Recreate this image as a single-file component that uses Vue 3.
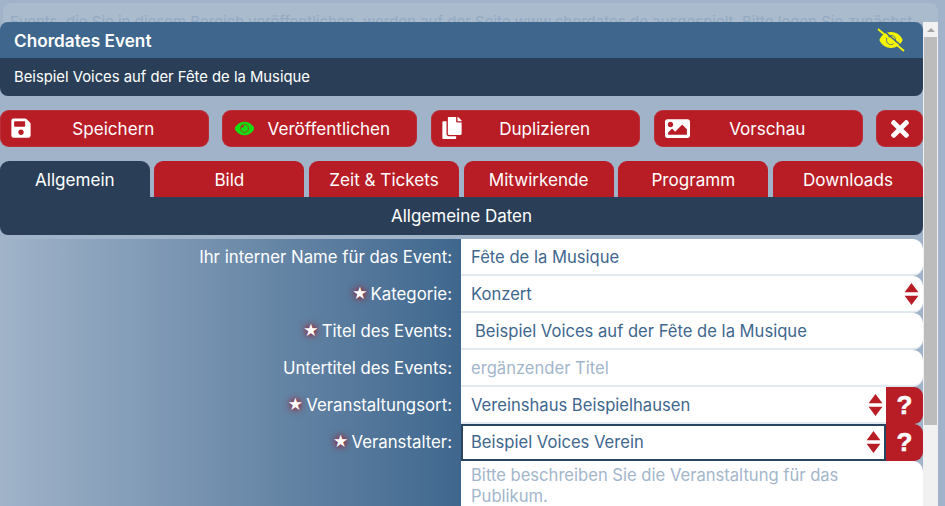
<script setup>
const actions = [
  { label: 'Speichern', icon: 'save', w: 208.7 },
  { label: 'Veröffentlichen', icon: 'eye', w: 195.3 },
  { label: 'Duplizieren', icon: 'copy', w: 209.3 },
  { label: 'Vorschau', icon: 'image', w: 209 },
]
const icons = {
  save: { box: '0 0 448 512', d: 'M433.941 129.941l-83.882-83.882A48 48 0 0 0 316.118 32H48C21.49 32 0 53.49 0 80v352c0 26.51 21.49 48 48 48h352c26.51 0 48-21.49 48-48V163.882a48 48 0 0 0-14.059-33.941zM224 416c-35.346 0-64-28.654-64-64 0-35.346 28.654-64 64-64s64 28.654 64 64c0 35.346-28.654 64-64 64zm96-304.52V212c0 6.627-5.373 12-12 12H76c-6.627 0-12-5.373-12-12V108c0-6.627 5.373-12 12-12h228.52c3.183 0 6.235 1.264 8.485 3.515l3.48 3.48A11.996 11.996 0 0 1 320 111.48z' },
  eye: { box: '0 0 576 512', d: 'M572.52 241.4C518.29 135.59 410.93 64 288 64S57.68 135.64 3.48 241.41a32.35 32.35 0 0 0 0 29.19C57.71 376.41 165.07 448 288 448s230.32-71.64 284.52-177.41a32.35 32.35 0 0 0 0-29.19zM288 400a144 144 0 1 1 144-144 143.93 143.93 0 0 1-144 144zm0-240a95.31 95.31 0 0 0-25.31 3.79 47.85 47.85 0 0 1-66.9 66.9A95.78 95.78 0 1 0 288 160z' },
  copy: { box: '0 0 448 512', d: 'M320 448v40c0 13.255-10.745 24-24 24H24c-13.255 0-24-10.745-24-24V120c0-13.255 10.745-24 24-24h72v296c0 30.879 25.121 56 56 56h168zm0-344V0H152c-13.255 0-24 10.745-24 24v368c0 13.255 10.745 24 24 24h272c13.255 0 24-10.745 24-24V128H344c-13.2 0-24-10.8-24-24zm120.971-31.029L375.029 7.029A24 24 0 0 0 358.059 0H352v96h96v-6.059a24 24 0 0 0-7.029-16.97z' },
  image: { box: '0 0 512 512', d: 'M464 448H48c-26.51 0-48-21.49-48-48V112c0-26.51 21.49-48 48-48h416c26.51 0 48 21.49 48 48v288c0 26.51-21.49 48-48 48zM112 120c-30.928 0-56 25.072-56 56s25.072 56 56 56 56-25.072 56-56-25.072-56-56-56zM64 384h384V272l-87.515-87.515c-4.686-4.686-12.284-4.686-16.971 0L208 320l-55.515-55.515c-4.686-4.686-12.284-4.686-16.971 0L64 336v48z' },
}
const tabs = ['Allgemein', 'Bild', 'Zeit & Tickets', 'Mitwirkende', 'Programm', 'Downloads']
const rows = [
  { label: 'Ihr interner Name für das Event:', value: 'Fête de la Musique' },
  { label: 'Kategorie:', value: 'Konzert', req: true, select: true },
  { label: 'Titel des Events:', value: 'Beispiel Voices auf der Fête de la Musique', req: true, indent: true },
  { label: 'Untertitel des Events:', value: 'ergänzender Titel', ph: true },
  { label: 'Veranstaltungsort:', value: 'Vereinshaus Beispielhausen', req: true, select: true, help: true },
  { label: 'Veranstalter:', value: 'Beispiel Voices Verein', req: true, select: true, help: true, focus: true },
]
</script>

<template>
  <div class="page">
    <div class="notice">Events, die Sie in diesem Bereich veröffentlichen, werden auf der Seite www.chordates.de ausgespielt. Bitte legen Sie zunächst</div>
    <div class="dialog">
      <div class="scrollpane">
        <header class="head">
          <div class="head-top">
            <span>Chordates Event</span>
            <svg class="slash" viewBox="0 0 28 24">
              <path class="slash-eye" transform="translate(3 2.2) scale(0.0382)" :d="icons.eye.d" />
              <path class="slash-gap" d="M3.5 0 28 21" />
              <path class="slash-line" d="M1 1 27 23" />
            </svg>
          </div>
          <div class="head-sub">Beispiel Voices auf der Fête de la Musique</div>
        </header>

        <div class="actions">
          <button v-for="a in actions" :key="a.label" class="btn" :style="{ width: a.w + 'px' }">
            <svg class="btn-icon" :class="'i-' + a.icon" :viewBox="icons[a.icon].box"><path :d="icons[a.icon].d" /></svg>
            <span class="btn-label">{{ a.label }}</span>
          </button>
          <button class="btn close">
            <svg viewBox="0 0 352 512"><path d="M242.72 256l100.07-100.07c12.28-12.28 12.28-32.19 0-44.48l-22.24-22.24c-12.28-12.28-32.19-12.28-44.48 0L176 189.28 75.93 89.21c-12.28-12.28-32.19-12.28-44.48 0L9.21 111.45c-12.28 12.28-12.28 32.19 0 44.48L109.28 256 9.21 356.07c-12.28 12.28-12.28 32.19 0 44.48l22.24 22.24c12.28 12.28 32.2 12.28 44.48 0L176 322.72l100.07 100.07c12.28 12.28 32.2 12.28 44.48 0l22.24-22.24c12.28-12.28 12.28-32.19 0-44.48L242.72 256z"/></svg>
          </button>
        </div>

        <nav class="tabs">
          <div v-for="(t, i) in tabs" :key="t" class="tab" :class="{ active: i === 0 }">{{ t }}</div>
        </nav>
        <div class="section">Allgemeine Daten</div>

        <div class="form">
          <div v-for="r in rows" :key="r.label" class="row">
            <div class="label"><span v-if="r.req" class="star">★</span>{{ r.label }}</div>
            <div class="field-wrap">
              <div class="field" :class="{ ph: r.ph, focus: r.focus, indent: r.indent, square: r.help }">
                <span>{{ r.value }}</span>
                <svg v-if="r.select" class="updown" viewBox="0 0 16 26"><path d="M8 1 15.5 11H.5zM.5 15h15L8 25z"/></svg>
              </div>
              <div v-if="r.help" class="help">?</div>
            </div>
          </div>
          <div class="row tall">
            <div class="label"></div>
            <div class="field-wrap">
              <div class="field ph area">Bitte beschreiben Sie die Veranstaltung für das Publikum.</div>
            </div>
          </div>
        </div>
      </div>
      <div class="scrollbar">
        <div class="sb-up"></div>
        <div class="sb-thumb"></div>
      </div>
    </div>
  </div>
</template>

<style>
html, body { margin: 0; padding: 0; overflow: hidden; background: #a0b3c9; }
</style>

<style scoped>
.page {
  position: relative;
  width: 945px;
  height: 506px;
  overflow: hidden;
  padding-top: 3px;
  box-sizing: border-box;
  background: #a0b3c9;
  font-family: Inter, "Noto Sans", sans-serif;
  font-size: 16.6px;
  color: #fff;
}
.notice {
  margin: 0 7px 0 3px;
  height: 100px;
  padding: 9px 7px;
  box-sizing: border-box;
  border-radius: 8px;
  background: #a9bbcc;
  color: #94a9c4;
  font-size: 15px;
  white-space: nowrap;
  overflow: hidden;
}
.dialog {
  position: absolute;
  left: 0;
  top: 22px;
  width: 938px;
  height: 484px;
  display: flex;
  overflow: hidden;
  background: #a0b3c9;
}
.scrollpane { width: 923px; flex: none; }
.head-top {
  height: 36px;
  padding: 0 14px;
  display: flex;
  align-items: center;
  justify-content: space-between;
  background: #3f678e;
  border-radius: 8px 8px 0 0;
  font-size: 17.2px;
  font-weight: 600;
}
.slash { width: 28px; height: 24px; fill: #f5f500; margin-right: 4px; }
.slash-eye { stroke: #f5f500; stroke-width: 30; }
.slash-gap { fill: none; stroke: #3f678e; stroke-width: 1.6; }
.slash-line { fill: none; stroke: #f5f500; stroke-width: 1.8; }
.head-sub {
  height: 38px;
  padding: 0 14px;
  display: flex;
  align-items: center;
  background: #2a3f57;
  border-radius: 0 0 8px 8px;
  font-size: 14.8px;
}
.actions {
  display: flex;
  justify-content: space-between;
  margin-top: 14px;
}
.btn {
  position: relative;
  height: 37px;
  padding: 0 0 0 18px;
  box-sizing: border-box;
  border: 0;
  border-radius: 9px;
  background: #b81d26;
  color: #fff;
  font: inherit;
  font-size: 17.1px;
  display: flex;
  align-items: center;
  justify-content: center;
  box-shadow: inset 0 0 0 1px #c0505a55;
}
.btn-icon { position: absolute; left: 11px; top: 7px; height: 22px; width: 20px; fill: #fff; }
.i-eye { fill: #12e012; stroke: #12e012; stroke-width: 30; left: 13px; top: 9px; width: 19px; height: 19px; }
.i-image { width: 25px; height: 25px; top: 6px; }
.close { width: 46.7px; padding: 0; }
.close svg { height: 26px; width: 22px; fill: #fff; }
.tabs {
  display: flex;
  justify-content: space-between;
  margin-top: 14px;
}
.tab {
  width: 150px;
  height: 36px;
  display: flex;
  align-items: center;
  justify-content: center;
  background: #b81d26;
  border-radius: 9px 9px 0 0;
  font-size: 17.1px;
}
.tab:first-child { width: 149.7px; }
.tab.active { background: #2a3f57; }
.section {
  height: 38px;
  display: flex;
  align-items: center;
  justify-content: center;
  background: #2a3f57;
  border-radius: 0 0 8px 8px;
  font-size: 17px;
}
.form {
  margin-top: 4px;
  background: linear-gradient(90deg, #a0b3c9 0, #3f678e 461px, #a0b3c9 461px);
}
.row { display: flex; height: 37px; }
.row.tall { height: 70px; }
.label {
  width: 461px;
  flex: none;
  box-sizing: border-box;
  padding: 0 9px 2px 0;
  display: flex;
  align-items: center;
  justify-content: flex-end;
  font-size: 16.8px;
}
.star {
  margin-right: 3px;
  font-size: 15px;
  text-shadow: 0 0 5px #a02030, 0 0 8px #a02030;
}
.field-wrap { flex: 1; display: flex; min-width: 0; }
.field {
  flex: 1;
  display: flex;
  align-items: center;
  justify-content: space-between;
  box-sizing: border-box;
  padding: 0 4px 0 10px;
  background: #fff;
  border-bottom: 2px solid #e3e9f0;
  border-radius: 0 10px 10px 0;
  color: #3f678e;
}
.field.indent { padding-left: 14px; }
.field.ph { color: #a3b6cb; }
.field.square { border-radius: 0; padding-right: 3px; }
.field.focus { border: 2px solid #2a4560; padding: 0 3px 2px 8px; }
.area { display: block; padding: 4px 50px 0 10px; line-height: 21px; border: 0; }
.updown { width: 15px; height: 24px; fill: #b81d26; flex: none; }
.help {
  width: 37px;
  flex: none;
  display: flex;
  align-items: center;
  justify-content: center;
  background: #b81d26;
  border-radius: 0 9px 9px 0;
  font-family: "Liberation Sans", sans-serif;
  font-size: 26px;
  font-weight: 700;
  -webkit-text-stroke: 0.6px #fff;
}
.scrollbar {
  width: 15px;
  flex: none;
  background: #f1f1f1;
  display: flex;
  flex-direction: column;
  align-items: center;
}
.sb-up {
  height: 0;
  width: 0;
  margin: 6px 0 5px;
  border: 4px solid transparent;
  border-top: 0;
  border-bottom: 4px solid #a3a3a3;
}
.sb-thumb { width: 13px; height: 388px; background: #bcbcbc; }
</style>
